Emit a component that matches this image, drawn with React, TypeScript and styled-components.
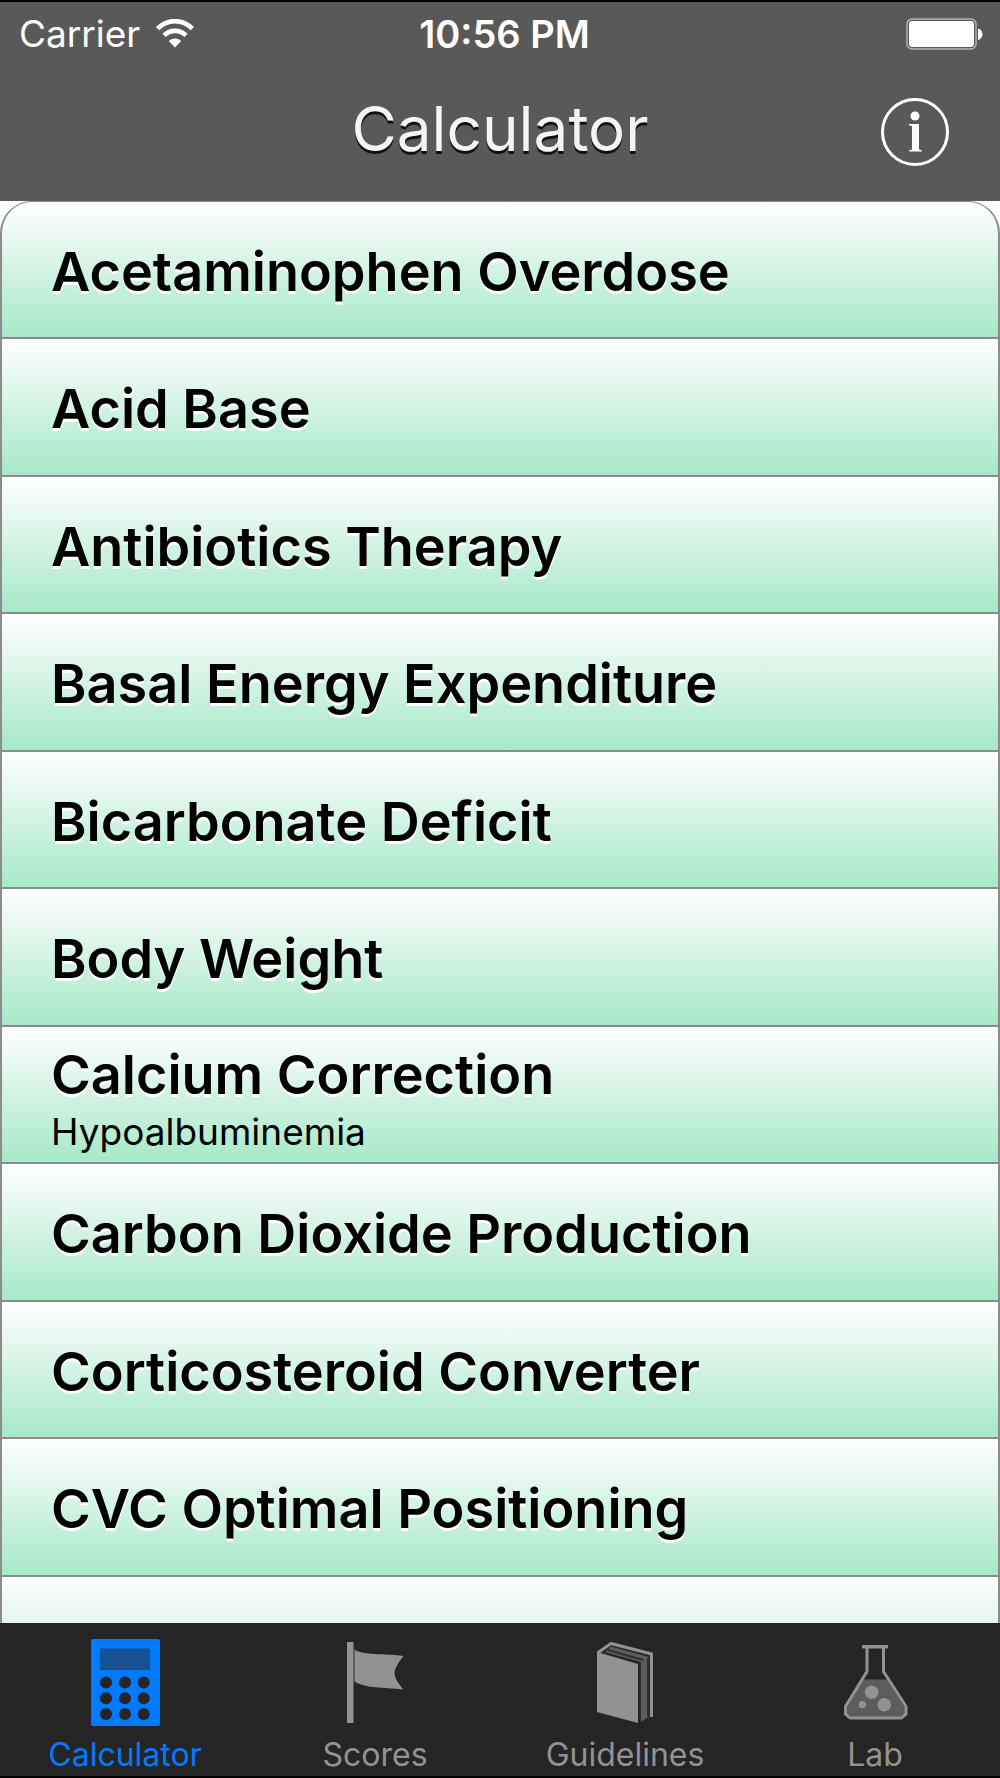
import React from "react";
import styled, { createGlobalStyle } from "styled-components";

const GlobalStyle = createGlobalStyle`
  *, *::before, *::after { box-sizing: border-box; }
  body {
    margin: 0;
    background: #fff;
    font-family: Inter, "Liberation Sans", sans-serif;
  }
`;

const Screen = styled.div`
  display: flex;
  flex-direction: column;
  height: 100vh;
  overflow: hidden;
  border-top: 2px solid #000;
  border-bottom: 2px solid #000;
`;

const Header = styled.header`
  flex: none;
  background: #595959;
  color: #fff;
`;

const StatusBar = styled.div`
  display: grid;
  grid-template-columns: 1fr auto 1fr;
  align-items: center;
  height: 64px;
  padding: 0 16px 0 19px;
  line-height: 44px;
`;

const Network = styled.div`
  display: flex;
  align-items: center;
  gap: 16px;
  font-size: 37px;
`;

const Clock = styled.time`
  padding-left: 6px;
  font-size: 38px;
  font-weight: 600;
`;

const BatterySlot = styled.div`
  display: flex;
  justify-content: flex-end;
`;

const NavBar = styled.div`
  display: grid;
  grid-template-columns: 1fr auto 1fr;
  align-items: center;
  height: 135px;
  padding: 0 50px 4px;
`;

const Title = styled.h1`
  grid-column: 2;
  margin: 0;
  padding-bottom: 6px;
  color: #f4f4f4;
  font-size: 62px;
  font-weight: 400;
  line-height: 76px;
  text-shadow: 0 3px 0 #111;
`;

const InfoButton = styled.button`
  justify-self: end;
  width: 70px;
  height: 70px;
  padding: 0;
  border: 0;
  background: none;
  cursor: pointer;
`;

const List = styled.ul`
  flex: 1;
  min-height: 0;
  margin: 0;
  padding: 0;
  overflow: hidden;
  list-style: none;
`;

const Row = styled.li`
  box-sizing: content-box;
  height: 135px;
  border: solid #8c8c8c;
  border-width: 0 2px 2px;
  background: linear-gradient(#fff, #d3f3e4 50%, #a6e9c8);

  &:nth-child(even) { height: 136px; }
  &:first-child {
    border-top-width: 1px;
    border-radius: 32px 32px 0 0;
  }
`;

const RowLink = styled.a<{ $hasNote: boolean }>`
  display: flex;
  flex-direction: column;
  justify-content: center;
  height: 100%;
  padding: ${(p) => (p.$hasNote ? "10px" : "4px")} 0 0 49px;
  color: #000;
  text-decoration: none;
`;

const RowTitle = styled.span`
  font-size: 54px;
  font-weight: 600;
  line-height: 64px;
  text-shadow: 0 3px 0 #fff;
`;

const RowNote = styled.span`
  font-size: 37px;
  line-height: 50px;
`;

const TabBar = styled.nav`
  flex: none;
  display: grid;
  grid-template-columns: repeat(4, 1fr);
  height: 153px;
  padding-top: 16px;
  background: #252525;
`;

const Tab = styled.a<{ $active?: boolean }>`
  display: flex;
  flex-direction: column;
  align-items: center;
  gap: 8px;
  color: ${(p) => (p.$active ? "#007aff" : "#929292")};
  font-size: 32px;
  line-height: 40px;
  text-decoration: none;
`;

const WifiIcon = () => (
  <svg width="38" height="30" viewBox="0 0 38 30" aria-hidden="true">
    <g fill="none" stroke="#fff" strokeWidth="4.6">
      <path d="M1.6 9.6C11.5-.3 26.5-.3 36.4 9.6" />
      <path d="M8 16.4C14.2 10.4 23.8 10.4 30 16.4" />
    </g>
    <path d="M12.8 22C16.5 18.7 21.5 18.7 25.2 22L19 28.4Z" fill="#fff" />
  </svg>
);

const BatteryIcon = () => (
  <svg width="78" height="32" viewBox="0 0 78 32" role="img" aria-label="Battery full">
    <rect x="1" y="1" width="69" height="30" rx="5" fill="none" stroke="#b4b4b4" strokeWidth="1.5" />
    <rect x="3" y="3" width="65" height="26" rx="3" fill="#fff" />
    <path d="M72 10.5C78 12 78 20.5 72 22Z" fill="#fff" />
  </svg>
);

const InfoIcon = () => (
  <svg width="70" height="70" viewBox="0 0 70 70" aria-hidden="true">
    <circle cx="35" cy="35" r="32.5" fill="none" stroke="#fff" strokeWidth="3" />
    <circle cx="35" cy="19" r="4.5" fill="#fff" />
    <path d="M29 27H39V52.5L42 53.5V54.5H29V53.5L32 52.5V29L29 28.2Z" fill="#fff" />
  </svg>
);

const CalculatorIcon = () => (
  <svg width="96" height="88" viewBox="0 0 96 88" aria-hidden="true">
    <rect x="14" y="0" width="69" height="87" rx="2" fill="#007aff" />
    <rect x="23" y="9.5" width="50" height="21.5" fill="#175193" />
    {[43.5, 59.3, 75].map((cy) =>
      [29, 48, 66.7].map((cx) => (
        <circle key={`${cx}-${cy}`} cx={cx} cy={cy} r="6" fill="#252525" />
      ))
    )}
  </svg>
);

const FlagIcon = () => (
  <svg width="96" height="88" viewBox="0 0 96 88" aria-hidden="true">
    <rect x="20" y="3" width="6.5" height="81" fill="#929292" />
    <path d="M26.5 10C36 17 58 14 76.5 17C70 25 68 30 67.5 34C68 40 71 44 76.5 50.5C56 48 38 50 26.5 42Z" fill="#929292" />
    <path d="M27.2 10V43" stroke="#555" strokeWidth="1.5" />
  </svg>
);

const BookIcon = () => (
  <svg width="96" height="88" viewBox="0 0 96 88" aria-hidden="true">
    <path d="M20 13L33 3L76 14V78L61 84L20 73Z" fill="#252525" />
    <path d="M27 14L34 7.5L72 18V78L63.5 83V24Z" fill="#5c5c5c" />
    <path d="M71 19V80M31 11L66 21" fill="none" stroke="#303030" strokeWidth="2" />
    <path d="M62.5 84V24L26 14" fill="none" stroke="#252525" strokeWidth="2.5" />
    <path d="M20.5 14L34 4.5L74.5 15V78" fill="none" stroke="#929292" strokeWidth="3" />
    <path d="M20 13L61 25V84L20 73Z" fill="#929292" />
  </svg>
);

const FlaskIcon = () => (
  <svg width="96" height="88" viewBox="0 0 96 88" aria-hidden="true">
    <path d="M36 40.5H60L78 69V76L74 79H23L19 76V69Z" fill="#5c5c5c" />
    <path
      d="M40 8V32.5L18.5 67.500V75L23 79H74.5L79 75V67.5L56.5 32.5V8"
      fill="none"
      stroke="#929292"
      strokeWidth="3"
    />
    <rect x="35" y="6" width="26" height="3.5" rx="1" fill="#929292" />
    <g fill="#929292">
      <circle cx="44.7" cy="53.3" r="6.8" />
      <circle cx="57.3" cy="65.7" r="6.8" />
      <circle cx="35.3" cy="65.7" r="3.6" />
    </g>
  </svg>
);

const calculators: { title: string; note?: string }[] = [
  { title: "Acetaminophen Overdose" },
  { title: "Acid Base" },
  { title: "Antibiotics Therapy" },
  { title: "Basal Energy Expenditure" },
  { title: "Bicarbonate Deficit" },
  { title: "Body Weight" },
  { title: "Calcium Correction", note: "Hypoalbuminemia" },
  { title: "Carbon Dioxide Production" },
  { title: "Corticosteroid Converter" },
  { title: "CVC Optimal Positioning" },
];

const tabs = [
  { label: "Calculator", Icon: CalculatorIcon, active: true },
  { label: "Scores", Icon: FlagIcon },
  { label: "Guidelines", Icon: BookIcon },
  { label: "Lab", Icon: FlaskIcon },
];

export default function App() {
  return (
    <>
      <GlobalStyle />
      <Screen>
        <Header>
          <StatusBar>
            <Network>
              <span>Carrier</span>
              <WifiIcon />
            </Network>
            <Clock>10:56 PM</Clock>
            <BatterySlot>
              <BatteryIcon />
            </BatterySlot>
          </StatusBar>
          <NavBar>
            <Title>Calculator</Title>
            <InfoButton type="button" aria-label="Information">
              <InfoIcon />
            </InfoButton>
          </NavBar>
        </Header>
        <List>
          {calculators.map(({ title, note }) => (
            <Row key={title}>
              <RowLink href="#" $hasNote={Boolean(note)}>
                <RowTitle>{title}</RowTitle>
                {note && <RowNote>{note}</RowNote>}
              </RowLink>
            </Row>
          ))}
          <Row aria-hidden="true" />
        </List>
        <TabBar>
          {tabs.map(({ label, Icon, active }) => (
            <Tab key={label} href="#" $active={active} aria-current={active ? "page" : undefined}>
              <Icon />
              {label}
            </Tab>
          ))}
        </TabBar>
      </Screen>
    </>
  );
}
